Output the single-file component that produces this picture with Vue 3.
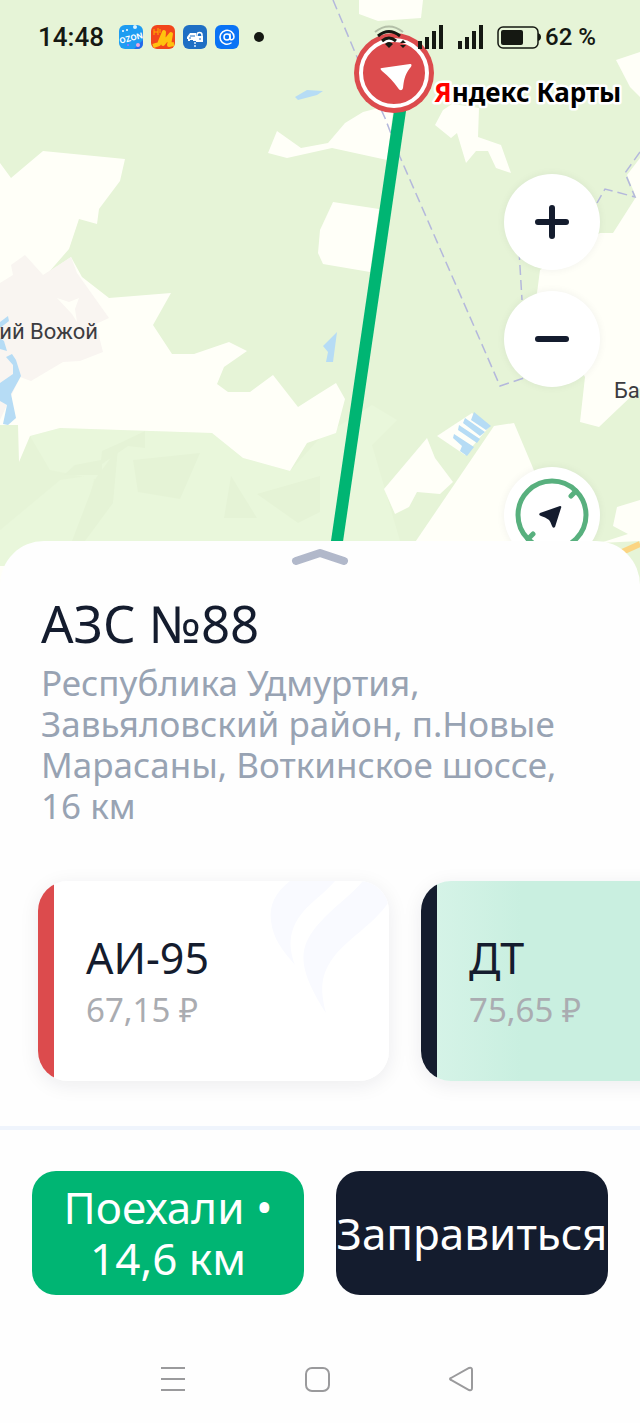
<template>
  <main class="screen">
    <section class="map">
      <svg class="map-canvas" viewBox="0 0 640 600" preserveAspectRatio="xMidYMin slice" aria-hidden="true">
        <rect width="640" height="600" fill="#e6f4d7" />
        <g fill="#e9f7db">
          <path d="M30 436 60 428 212 433 243 458 290 471 320 438 372 405 397 420 372 445 400 541 120 541 75 541 100 480 50 470z" />
          <path d="M0 530 60 480 95 475 80 541 0 575z" />
        </g>
        <g fill="#e5f3d6">
          <path d="M64 475 75 465 101 460 102 451 120 443 145 431 145 448 128 446 102 464 102 475z" />
          <path d="M133 460 200 453 180 499 138 492zM96 478 118 448 113 503 85 541 72 541zM231 476 257 518 224 518zM257 494 320 476 320 512 298 523z" />
        </g>
        <g fill="#fffff8">
          <path d="M0 163 11 178 43 151 125 159 120 181 99 209 97 224 79 219 69 249 49 272 71 257 82 277 109 298 171 293 153 325 172 354 194 354 229 342 247 351 224 367 217 384 228 392 250 392 273 375 298 407 320 393 336 383 345 399 336 433 307 443 290 471 243 458 212 433 60 428 30 436 19 462 18 425 0 425z" />
          <path d="M359 0V14L378 21 421 18 423 0z" />
          <path d="M268 153 277 131 301 148 328 143 345 123 363 112 394 104 387 160 332 148 287 158z" />
          <path d="M435 125 443 110 452 104 479 108 478 137 501 145 511 173 496 168 488 151 476 151 466 163 457 133 451 138z" />
          <path d="M333 202 379 209 370 272 323 264 318 253 320 230z" />
          <path d="M640 52 616 60 630 87 640 97z" />
          <path d="M640 158 627 175 636 197 613 233H600L540 270 537 293 585 377 580 422 599 427 640 388z" />
          <path d="M494 426 514 423 533 468 565 560H403z" />
          <path d="M427 438 435 458 453 482 440 494 417 492 409 507 395 514 384 489z" />
          <path d="M437 436 472 413 490 426 465 455z" />
          <path d="M640 500 617 507 613 526 628 534 600 543 640 541z" />
          <path d="M0 566H20V600H0z" />
        </g>
        <path
          d="M0 283 13 275 11 265 25 255 43 275 71 257 77 273 109 318 96 324 103 352 80 361 63 362 31 381 20 377 0 420z"
          fill="#f9f5f1"
        />
        <path d="M57 298 69 302 79 298 75 309 77 322 72 314z" fill="#fffff8" />
        <g fill="#b6dcf5">
          <path d="M0 383 13 374V365L6 357 12 354 16 360 21 376 11 394 16 418 8 425 3 424 7 405 0 401zM0 338 4 341 7 351 0 349zM0 322 8 316 9 321 0 328z" />
          <path d="M295 97 307 90 323 91 317 95 298 100z" />
          <path d="M337 332 333 362H326L328 352 323 346z" />
          <path d="M474 412 491 426 486 430 471 420zM465 418 485 432 480 436 463 423zM459 425 480 439 477 443 458 430zM454 434 474 447 467 456 460 451 462 446 453 438z" />
        </g>
        <g fill="none" stroke="#b4b8dc" stroke-width="1.5" stroke-dasharray="10 5">
          <path d="M333 0 357 57 385 118 400 157 480 340 500 386 524 378" />
          <path d="M640 152 625 173 635 197 605 189 597 203" />
          <path d="M519 250 522 300" />
        </g>
        <path d="M620 553 640 544" stroke="#fbd583" stroke-width="6" />

        <text class="place" x="98" y="339" text-anchor="end">ий Вожой</text>
        <text class="place" x="614" y="398">Ба</text>

        <path d="M401 104 336 548" stroke="#00b573" stroke-width="12" />
        <circle cx="394" cy="73" r="40" fill="#dc4b4d" />
        <circle cx="394" cy="73" r="33" fill="none" stroke="#fff" stroke-width="4" />
        <path
          d="M382 68 410 64C412 64 412 66 410 68C404 76 404 81 403 88C402 91 400 91 398 88C394 82 389 77 382 71C380 69 380 68 382 68Z"
          fill="#fff"
        />

        <text class="brand" x="434" y="102"><tspan fill="#f00">Я</tspan>ндекс Карты</text>
      </svg>

      <header class="status-bar">
        <time class="clock">14:48</time>
        <div class="app-icons">
          <svg width="24" height="24" viewBox="0 0 24 24" aria-hidden="true">
            <rect width="24" height="24" rx="6" fill="#1e9cf2" />
            <path d="M15 24 24 15V18Q24 24 18 24z" fill="#2469ea" />
            <text class="ozon" x="0" y="16" transform="rotate(-14 12 12)">OZON</text>
            <circle cx="4" cy="6" r="1" fill="#fff" />
            <circle cx="8" cy="5" r="1" fill="#fff" />
            <circle cx="16" cy="2" r="2" fill="#d9f2ff" />
            <circle cx="19" cy="20" r="2" fill="#f0a5dc" />
            <circle cx="9" cy="20" r="1" fill="#a66bff" />
          </svg>
          <svg width="24" height="24" viewBox="0 0 24 24" aria-hidden="true">
            <rect width="24" height="24" rx="6" fill="#f2461b" />
            <path d="M3 4V10M3 7H7M7 3V10M9 4V8" stroke="#ffb000" fill="none" />
            <path d="M2 21 8 19 13 7 12 19 20 9 18 20 23 19" fill="none" stroke="#ffc20e" stroke-width="4" stroke-linejoin="round" />
          </svg>
          <svg width="24" height="24" viewBox="0 0 24 24" aria-hidden="true">
            <rect width="24" height="24" rx="6" fill="#1f6fc4" />
            <path d="M4 12 7 8H13V16H10V15H7V16H5V14H4zM13 11H20V17H13z" fill="#fff" />
            <path d="M14 11V10a2 2 0 0 1 5 0V11" fill="none" stroke="#fff" stroke-width="1.5" />
            <path d="M7 11H12M6 13H8M17 13V15" stroke="#1f6fc4" />
            <path d="M12 17V22" stroke="#a9cdf0" stroke-width="2" stroke-dasharray="2 1" />
          </svg>
          <svg width="24" height="24" viewBox="0 0 24 24" aria-hidden="true">
            <rect width="24" height="24" rx="6" fill="#0a73f5" />
            <circle cx="12" cy="12" r="3" fill="none" stroke="#fff" stroke-width="1.5" />
            <path d="M15 9V13C15 16 19 15 19 12A7 7 0 1 0 16 18" fill="none" stroke="#fff" stroke-width="1.5" stroke-linecap="round" />
          </svg>
        </div>
        <span class="more-dot"></span>

        <div class="indicators">
          <svg width="34" height="26" viewBox="0 0 34 26" aria-hidden="true">
            <path d="M2 8Q16 -3 30 8" fill="none" stroke="#1a1f17" stroke-opacity=".25" stroke-width="2" />
            <path d="M5 12Q16 3 27 12M9 17Q16 11 23 17" fill="none" stroke="#151812" stroke-width="3" />
            <path d="M12 20Q16 16 20 20L16 24zM27 19 30 16 33 19zM27 21 30 24 33 21z" fill="#151812" />
          </svg>
          <svg v-for="sim in 2" :key="sim" class="signal" width="26" height="24" viewBox="0 0 26 24" aria-hidden="true">
            <path d="M3 24V16M10 24V12M17 24V6M24 24V0" stroke="#151812" stroke-width="4" />
          </svg>
          <svg class="battery" width="44" height="24" viewBox="0 0 44 24" aria-hidden="true">
            <rect x="1" y="2" width="40" height="21" rx="5" fill="none" stroke="#151812" stroke-width="1.5" />
            <rect x="4" y="5" width="22" height="15" rx="2" fill="#151812" />
            <path d="M41 8Q44 9 44 12Q44 15 41 16z" fill="#151812" />
          </svg>
          <span class="percent">62 %</span>
        </div>
      </header>

      <div class="controls">
        <button class="round-btn" type="button" aria-label="Приблизить">
          <svg width="36" height="36" viewBox="0 0 36 36">
            <path d="M4 18H32M18 4V32" stroke="#141c2e" stroke-width="6" stroke-linecap="round" />
          </svg>
        </button>
        <button class="round-btn" type="button" aria-label="Отдалить">
          <svg width="36" height="36" viewBox="0 0 36 36">
            <path d="M4 18H32" stroke="#141c2e" stroke-width="6" stroke-linecap="round" />
          </svg>
        </button>
        <button class="round-btn locate" type="button" aria-label="Моё местоположение">
          <svg width="76" height="76" viewBox="0 0 76 76">
            <circle cx="38" cy="38" r="34" fill="none" stroke="#58b07e" stroke-width="5" />
            <path d="M62 14 57 19M14 62 19 57" stroke="#58b07e" stroke-width="5" stroke-linecap="round" />
            <path
              d="M26 36 46 29Q48 29 47 31L41 50Q39 52 38 49Q36 41 27 39Q24 38 26 36Z"
              fill="#141c2e"
            />
          </svg>
        </button>
      </div>
    </section>

    <section class="sheet">
      <button class="handle" type="button" aria-label="Развернуть">
        <svg width="58" height="20" viewBox="0 0 58 20">
          <path d="M5 14 29 6 53 14" fill="none" stroke="#b1b8ca" stroke-width="8" stroke-linecap="round" stroke-linejoin="round" />
        </svg>
      </button>

      <div class="station">
        <h1>{{ station.name }}</h1>
        <p>{{ station.address }}</p>
      </div>

      <div class="fuels">
        <button v-for="fuel in fuels" :key="fuel.name" class="fuel-card" :class="fuel.kind" type="button">
          <svg v-if="fuel.kind === 'petrol'" class="emblem" width="120" height="140" viewBox="0 0 120 140" aria-hidden="true">
            <path d="M21 0C6 12 0 24 2 40C4 58 14 70 26 84C20 68 18 50 34 31C42 21 56 12 66 0Z" fill="#f9faff" />
            <path d="M94 0C82 14 70 22 58 34C30 62 24 80 57 132C52 112 50 96 64 77C78 58 104 44 119 22L120 0Z" fill="#f9faff" />
          </svg>
          <span class="fuel-name">{{ fuel.name }}</span>
          <span class="fuel-price">{{ fuel.price }} ₽</span>
        </button>
      </div>

      <div class="actions">
        <button class="action go" type="button">Поехали • {{ station.distance }}</button>
        <button class="action refuel" type="button">Заправиться</button>
      </div>

      <nav class="system-nav">
        <button type="button" aria-label="Недавние">
          <svg width="28" height="28" viewBox="0 0 28 28">
            <path d="M2 3H26M2 14H26M2 25H26" />
          </svg>
        </button>
        <button type="button" aria-label="Домой">
          <svg width="28" height="28" viewBox="0 0 28 28">
            <rect x="3" y="3" width="23" height="23" rx="6" />
          </svg>
        </button>
        <button type="button" aria-label="Назад">
          <svg width="28" height="28" viewBox="0 0 28 28">
            <path d="M4 13 22 3Q25 2 25 5V23Q25 26 22 25L4 15Q2 14 4 13Z" />
          </svg>
        </button>
      </nav>
    </section>
  </main>
</template>

<script setup>
const station = {
  name: 'АЗС №88',
  address: 'Республика Удмуртия, Завьяловский район, п.Новые Марасаны, Воткинское шоссе, 16 км',
  distance: '14,6 км',
}

const fuels = [
  { name: 'АИ-95', price: '67,15', kind: 'petrol' },
  { name: 'ДТ', price: '75,65', kind: 'diesel' },
]
</script>

<style>
body {
  background: #fefefe;
}
</style>

<style scoped>
.screen {
  min-height: 100vh;
  overflow: hidden;
  background: #fefefe;
  color: #141c2e;
  font-family: 'Noto Sans', 'Open Sans', sans-serif;
}

button {
  margin: 0;
  padding: 0;
  border: none;
  background: none;
  color: inherit;
  font: inherit;
  cursor: pointer;
}

svg { display: block; }

.map {
  position: relative;
  height: 600px;
  overflow: hidden;
}

.map-canvas {
  position: absolute;
  inset: 0;
  width: 100%;
  height: 100%;
}

.place {
  fill: #3c3c40;
  font: 22px Roboto, sans-serif;
}

.brand {
  fill: #000;
  stroke: #fff;
  stroke-width: 5px;
  stroke-linejoin: round;
  paint-order: stroke;
  font: 700 26px 'Noto Sans', sans-serif;
}

.ozon {
  fill: #fff;
  font: 700 8px Inter, sans-serif;
}

.status-bar {
  position: relative;
  display: flex;
  align-items: center;
  height: 74px;
  padding: 0 44px 0 38px;
  color: #151812;
  font-family: Roboto, sans-serif;
  font-weight: 500;
}

.clock { font-size: 26px; }

.app-icons {
  display: flex;
  gap: 8px;
  margin-left: 15px;
}

.more-dot {
  width: 10px;
  height: 10px;
  margin-left: 15px;
  border-radius: 50%;
  background: #151812;
}

.indicators {
  display: flex;
  align-items: center;
  margin-left: auto;
}

.signal { margin-left: 10px; }

.signal + .signal { margin-left: 14px; }

.battery { margin-left: 14px; }

.percent {
  margin-left: 4px;
  font-size: 24px;
}

.controls {
  position: relative;
  display: flex;
  flex-direction: column;
  align-items: flex-end;
  gap: 21px;
  padding: 100px 40px 0;
}

.round-btn {
  display: grid;
  place-items: center;
  width: 96px;
  height: 96px;
  border-radius: 50%;
  background: #fff;
  box-shadow: 0 0 8px rgba(20, 28, 46, 0.06);
}

.locate { margin-top: 59px; }

.sheet {
  position: relative;
  margin-top: -59px;
  border-radius: 44px 44px 0 0;
  background: #fefefe;
}

.handle {
  display: block;
  margin: 0 auto;
  padding: 6px 0;
}

.station { padding: 18px 41px 0; }

.station h1 {
  margin: 0;
  font-size: 51px;
  font-weight: 400;
  line-height: 64px;
}

.station p {
  margin: 7px 0 0;
  color: #98a3b3;
  font-size: 35px;
  line-height: 41px;
}

.fuels {
  display: flex;
  gap: 32px;
  padding: 55px 38px 45px;
  overflow: hidden;
}

.fuel-card {
  position: relative;
  display: flex;
  flex: none;
  flex-direction: column;
  justify-content: center;
  width: 351px;
  height: 200px;
  padding-left: 48px;
  border-radius: 30px;
  box-shadow: 0 4px 20px rgba(20, 28, 46, 0.08);
  text-align: left;
}

.petrol { background: linear-gradient(90deg, #dc4b4d 16px, #fff 16px); }

.diesel { background: linear-gradient(90deg, #141c2e 16px, #d5f3e7 16px, #c9efe0 100px); }

.emblem {
  position: absolute;
  top: 0;
  right: 0;
  border-top-right-radius: 30px;
}

.fuel-name {
  position: relative;
  font-size: 43px;
  line-height: 58px;
}

.fuel-price {
  position: relative;
  color: #aaacb1;
  font-size: 33px;
  line-height: 46px;
}

.actions {
  display: grid;
  grid-template-columns: 1fr 1fr;
  gap: 32px;
  padding: 41px 32px 0;
  border-top: 4px solid #eff4fc;
}

.action {
  height: 124px;
  border-radius: 24px;
  color: #fff;
  font-size: 44px;
  line-height: 51px;
}

.go {
  padding: 0 24px;
  background: #00b573;
}

.refuel {
  background: #141c2e;
  white-space: nowrap;
}

.system-nav {
  display: flex;
  justify-content: center;
  gap: 116px;
  padding: 70px 6px 30px 0;
}

.system-nav svg {
  fill: none;
  stroke: #9a9a9c;
  stroke-width: 2;
}
</style>
